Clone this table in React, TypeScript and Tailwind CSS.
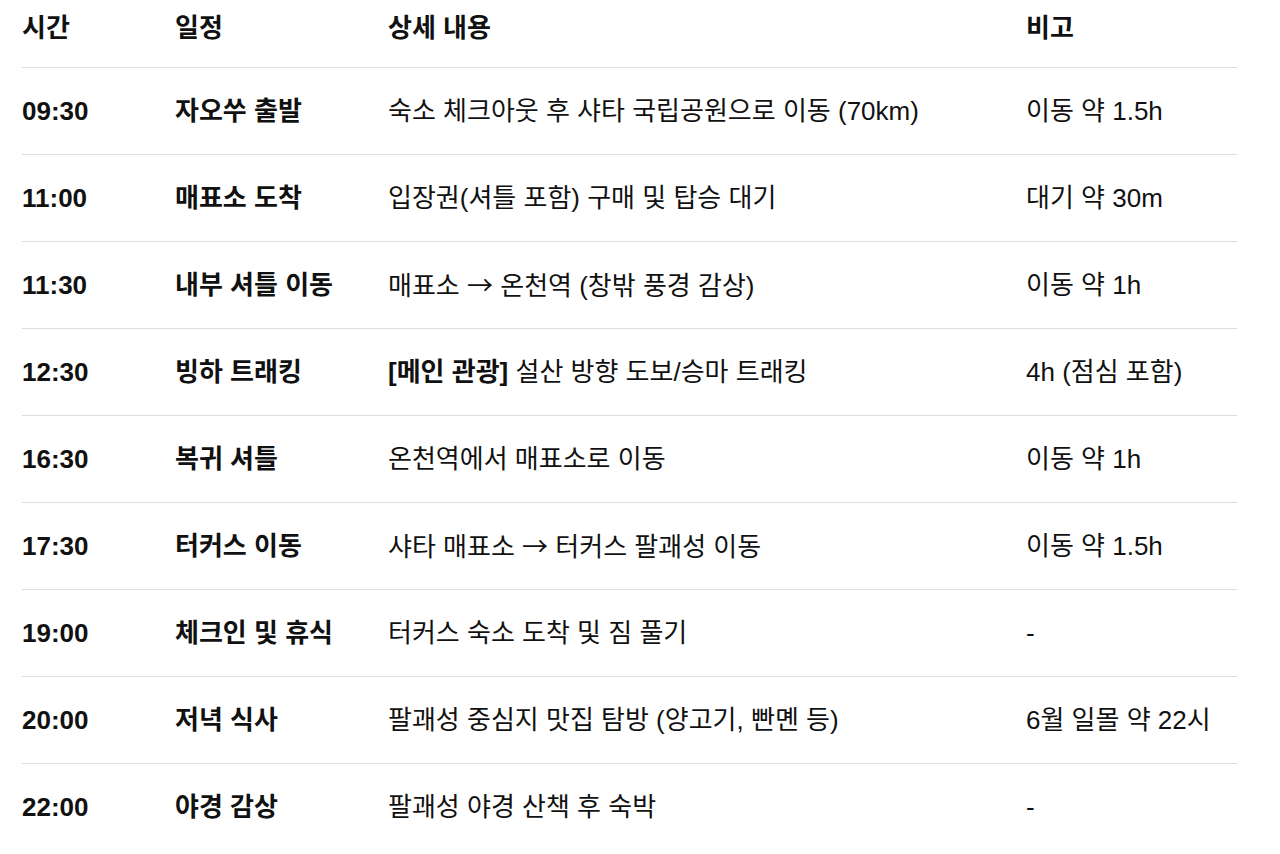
import React from "react";

interface Row {
  time: string;
  title: string;
  strong?: string;
  detail: string;
  note: string;
}

const rows: Row[] = [
  { time: "09:30", title: "자오쑤 출발", detail: "숙소 체크아웃 후 샤타 국립공원으로 이동 (70km)", note: "이동 약 1.5h" },
  { time: "11:00", title: "매표소 도착", detail: "입장권(셔틀 포함) 구매 및 탑승 대기", note: "대기 약 30m" },
  { time: "11:30", title: "내부 셔틀 이동", detail: "매표소 → 온천역 (창밖 풍경 감상)", note: "이동 약 1h" },
  { time: "12:30", title: "빙하 트래킹", strong: "[메인 관광]", detail: " 설산 방향 도보/승마 트래킹", note: "4h (점심 포함)" },
  { time: "16:30", title: "복귀 셔틀", detail: "온천역에서 매표소로 이동", note: "이동 약 1h" },
  { time: "17:30", title: "터커스 이동", detail: "샤타 매표소 → 터커스 팔괘성 이동", note: "이동 약 1.5h" },
  { time: "19:00", title: "체크인 및 휴식", detail: "터커스 숙소 도착 및 짐 풀기", note: "-" },
  { time: "20:00", title: "저녁 식사", detail: "팔괘성 중심지 맛집 탐방 (양고기, 빤몐 등)", note: "6월 일몰 약 22시" },
  { time: "22:00", title: "야경 감상", detail: "팔괘성 야경 산책 후 숙박", note: "-" },
];

const cols = "grid grid-cols-[153px_213px_638px_1fr] items-center";

// the arrow comes from the CJK font in the reference (long, thin)
function Detail({ text }: { text: string }) {
  const parts = text.split("→");
  return (
    <>
      {parts.map((p, i) => (
        <React.Fragment key={i}>
          {i > 0 && <span style={{ fontFamily: '"Noto Sans CJK KR", sans-serif' }}>→</span>}
          {p}
        </React.Fragment>
      ))}
    </>
  );
}

export default function App() {
  return (
    <div
      className="min-h-[854px] bg-white text-[#111] text-[26px] leading-[1.2]"
      style={{ fontFamily: '"Liberation Sans", "Noto Sans CJK KR", sans-serif' }}
    >
      <div className="ml-[22px] w-[1215px]">
        <div className={`${cols} h-[68px] pb-[10px] font-bold border-b border-[#dcdce6]`}>
          <div>시간</div>
          <div>일정</div>
          <div>상세 내용</div>
          <div>비고</div>
        </div>
        {rows.map((r, i) => (
          <div
            key={r.time}
            className={`${cols} h-[87px] pt-[1px] ${i < rows.length - 1 ? "border-b border-[#dcdce6]" : ""}`}
          >
            <div className="font-bold">{r.time}</div>
            <div className="font-bold">{r.title}</div>
            <div>
              {r.strong && <span className="font-bold">{r.strong}</span>}
              <Detail text={r.detail} />
            </div>
            <div>{r.note}</div>
          </div>
        ))}
      </div>
    </div>
  );
}
